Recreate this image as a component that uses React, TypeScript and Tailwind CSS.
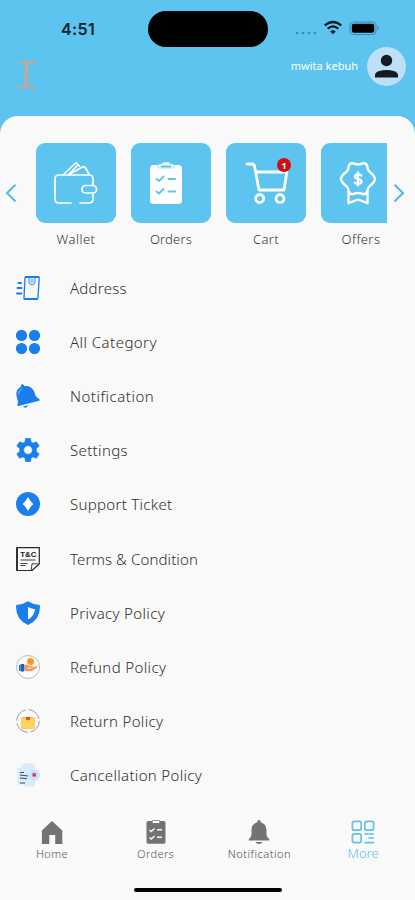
import type { ReactNode } from 'react';

interface Item {
  label: string;
  icon: ReactNode;
  className?: string;
}

function WalletIcon() {
  return (
    <svg className="h-[80px] w-[80px]" viewBox="0 0 80 80" fill="none" stroke="#fff" strokeWidth="1.7" strokeLinecap="round" strokeLinejoin="round">
      <path d="M35 60H23q-4 0-4-4V36q0-4 4-4h30q4 0 4 4v6M57 51v5q0 4-4 4H44" />
      <rect x="46" y="42.5" width="14.5" height="7.5" rx="3.5" />
      <path d="m27.5 31.500 11-10.500q1.500-1.500 3 0l2 2M33 31.500l13.500-7.500q2-1 3 1l3.500 6M33 31l8-8" />
    </svg>
  );
}

function OrdersIcon() {
  return (
    <svg className="h-[80px] w-[80px]" viewBox="0 0 80 80" fill="none">
      <rect x="19" y="22" width="32" height="39" rx="3.500" fill="#fff" />
      <path d="M27 25v-3q0-1 1.500-1h2q1-2 2.500-2h4q1.500 0 2.500 2h2q1.500 0 1.500 1v3z" fill="#fff" stroke="#5cc4ee" strokeWidth=".5" />
      <path d="M30.500 23.500h9M25.500 36l2.500 2 4.500-4.500M37.500 36H44M25.500 48.500l2.500 2 4.500-4.500M37.500 48.500H44" stroke="#5cc4ee" strokeWidth="2" strokeLinecap="round" />
    </svg>
  );
}

function CartIcon() {
  return (
    <svg className="h-[80px] w-[80px]" viewBox="0 0 80 80" fill="none" stroke="#fff" strokeWidth="2.8" strokeLinecap="round" strokeLinejoin="round">
      <path d="M21 21h5q2 0 2.500 2L33 47h25l2.800-18H30" />
      <circle cx="33.700" cy="55.500" r="4" />
      <circle cx="54" cy="55.500" r="4" />
    </svg>
  );
}

function OffersIcon() {
  return (
    <svg className="h-[80px] w-[80px] shrink-0" viewBox="0 0 80 80" fill="none" stroke="#fff" strokeWidth="2.4" strokeLinecap="round" strokeLinejoin="round">
      <path d="M37 21.500Q40 21 42 20.300q3.500-.5 4.300 3 .3 3.500 2 5.200 5.700 4.500 5.700 7.500t-5.700 7.500q-1.700 1.700-2 4.500-.8 3.500-4.300 3.200Q40 50 37 50t-5 1.200q-3.500.3-4.300-3.200-.3-2.800-2-4.500Q20 39 20 36t5.700-7.500q1.700-1.700 2-5.200.8-3.500 4.300-3Q34 21 37 21.500Z" />
      <path d="M27.500 48.500v11.700L37 56.500l9.500 3.700V48.500" />
      <path d="M40.300 32.500c-1.500-1.800-6.300-1.500-6.300 1.200 0 3.200 6.500 1.600 6.500 4.800 0 2.900-5 2.900-6.700 1.100M37 29.500v13" strokeWidth="2.300" />
    </svg>
  );
}

function AddressIcon() {
  return (
    <svg className="h-6 w-6" viewBox="0 0 24 24" fill="none" stroke="#197bea" strokeWidth="1.500" strokeLinecap="round" strokeLinejoin="round">
      <path d="M10 1h12.200q1.200 0 1 1.200l-1.200 19q-.100 1.700-1.800 1.700H9q-1.200 0-1-1.300L9 2q0-1 1-1Z" strokeWidth="1.300" />
      <path d="M10 1h12.500M8.500 23H21" strokeWidth="1.800" />
      <path d="M13 2v4q0 2.700 3 2.700T19 6V2" strokeWidth=".9" />
      <path d="M15 3v2.500q0 1 1 1t1-1V3" strokeWidth=".7" />
      <path d="M2.500 7H5M1.500 12h4M1 17.500h4.500" strokeWidth="1.900" />
    </svg>
  );
}

function CategoryIcon() {
  return (
    <svg className="h-6 w-6" viewBox="0 0 24 24" fill="#197fec">
      <circle cx="5.500" cy="5.500" r="5.600" />
      <circle cx="18.500" cy="5.500" r="5.600" />
      <circle cx="5.500" cy="18.500" r="5.600" />
      <circle cx="18.500" cy="18.500" r="5.600" />
    </svg>
  );
}

function RingingBellIcon() {
  return (
    <svg className="h-6 w-6" viewBox="0 0 24 24" fill="#197fec">
      <path d="M4.800 1.300Q6.500-.700 8 1.300l.200.900c4-.500 8.500 1.500 10 5.500 1 3 1.500 5.500 5 7.300.900.500.700 1.300 0 1.700L2.500 22c-1 .2-1.400-.6-1-1.400C3 17 .2 13.500.3 9.500.5 6.500 2 4 4.800 2.900z" />
      <path d="M7 22.600q2.800 2.700 5.700-1.300z" />
      <path d="M2.500 10q0-3.500 3-5.200" fill="none" stroke="#b8d8fa" strokeWidth=".7" strokeLinecap="round" />
    </svg>
  );
}

function SettingsIcon() {
  return (
    <svg className="h-6 w-6" viewBox="0 0 24 24" fill="#197fec">
      <path
        fillRule="evenodd"
        d="M9.500.300h5l.6 3.600 1.900 1.100 3.400-1.300L23.300 8l-2.900 2.600v2.800l2.900 2.600-2.900 4.300L17 19l-1.900 1.100-.6 3.600h-5l-.6-3.600L7 19l-3.400 1.300L.7 16l2.900-2.600v-2.800L.7 8l2.900-4.300L7 5l1.900-1.100zM12 7.700a4.300 4.300 0 1 0 0 8.600 4.300 4.300 0 0 0 0-8.600"
        stroke="#197fec"
        strokeWidth=".5"
        strokeLinejoin="round"
      />
    </svg>
  );
}

function SupportIcon() {
  return (
    <svg className="h-6 w-6" viewBox="0 0 24 24">
      <circle cx="12" cy="12" r="12" fill="#197fec" />
      <path d="M12 5q2 4 5.300 7-3.300 3-5.300 7-2-4-5.300-7Q10 9 12 5" fill="#fff" />
    </svg>
  );
}

function TermsIcon() {
  return (
    <svg className="h-6 w-6" viewBox="0 0 24 24" fill="none" stroke="#292929" strokeWidth="1.200">
      <path d="M1 .700h22.300V17L16 23.500H1Z" />
      <path d="M1 .700v22.800" strokeWidth="1.800" />
      <path d="M23 17l-7-.2-.8 6.700M4.500 13h15M4.500 16.500h7M4.500 18.500h5" strokeWidth=".9" />
      <text x="12.300" y="9.500" textAnchor="middle" fill="#202020" stroke="none" fontSize="7" fontWeight="900" fontFamily="Liberation Sans, sans-serif" textLength="16" lengthAdjust="spacingAndGlyphs">T&amp;C</text>
    </svg>
  );
}

function PrivacyIcon() {
  return (
    <svg className="h-6 w-6" viewBox="0 0 24 24">
      <path d="M12 .200q5 3.300 11.800 3.900Q25 18 12 24-1 18 .2 4.100 7 3.500 12 .200" fill="#197fec" />
      <path d="M12 6q3.500 2 7 2.300Q18.500 15 12 18.500Z" fill="#fff" />
    </svg>
  );
}

function RefundIcon() {
  return (
    <svg className="h-6 w-6" viewBox="0 0 24 24" fill="none">
      <circle cx="12" cy="12" r="11.500" fill="#fcfcfc" stroke="#aaa9aa" strokeWidth=".8" />
      <circle cx="14.500" cy="6.400" r="3.500" fill="#ff981e" />
      <path d="m13.500 6 1.500 1.300" stroke="#d96d29" strokeWidth=".8" />
      <path d="M8 9.800q3-1 5 1h3q1.500.500.500 1.700L20.800 11q1.500 0 .5 1.500l-5 3.300q-1 .5-3 .4L8 15.800z" fill="#f49a61" />
      <path d="M11.500 13h4" stroke="#fff" strokeWidth=".8" />
      <path d="M4.500 9H8v7.500H4.500z" fill="#0868ca" />
      <path d="M3.700 10v6" stroke="#17427d" />
    </svg>
  );
}

function ReturnIcon() {
  return (
    <svg className="h-6 w-6" viewBox="0 0 24 24" fill="none">
      <circle cx="12" cy="12" r="11.300" stroke="#9290a5" strokeWidth=".9" strokeDasharray="15 2.800" />
      <path d="m5 9.500 1.500-1.500h11L19 9.500v9q0 1.500-1.500 1.500h-11Q5 20 5 18.500Z" fill="#ffd35a" />
      <path d="M5 9.500 6.500 8h11L19 9.500" fill="#f7c64b" />
      <path d="M10 8h4v2.500l-2 1-2-1z" fill="#e2493d" />
    </svg>
  );
}

function CancellationIcon() {
  return (
    <svg className="h-6 w-6" viewBox="0 0 24 24" fill="none">
      <path d="M6 .500h11q2 0 2 3V21q0 2.500-2.500 2.500H10q-2 0-2-2H1.500V5Z" fill="#d8ebfb" />
      <circle cx="18.500" cy="12" r="5.500" fill="#cae4fa" />
      <path d="M6 .500V5H1.500" fill="#edf6fd" />
      <path d="M4 9.500h4M4 12l8 1M4 15l7 .7M4 20h5" stroke="#344d66" strokeWidth="1.100" />
      <path d="m16.700 10.400 3 3m0-3-3 3" stroke="#e52f52" strokeWidth="1.700" />
    </svg>
  );
}

function HomeNavIcon() {
  return (
    <svg className="h-6 w-6" viewBox="0 0 24 24" fill="#737373">
      <path d="M12 1 22.300 10.500V24h-7.100v-9H9.300v9H1.900V10.500z" />
    </svg>
  );
}

function OrdersNavIcon() {
  return (
    <svg className="h-6 w-6" viewBox="0 0 24 24" fill="none">
      <rect x="2.500" y="1" width="19" height="22.800" rx="1.800" fill="#737373" />
      <rect x="8" y=".3" width="8" height="3.200" rx="1.500" fill="#f9f9f9" stroke="#737373" />
      <path d="m5.500 10 1.800 1.500L10.500 8.500M13 9.700h5M5.500 17.500 7.300 19l3.200-3M13 17.200h5" stroke="#f5f5f5" strokeWidth="1.600" />
    </svg>
  );
}

function BellNavIcon() {
  return (
    <svg className="h-6 w-6" viewBox="0 0 24 24" fill="#737373">
      <path d="M12 0q1.600 0 1.800 2.200Q19.500 4 19.500 10v4.500q0 2.500 2.700 4.500v1.600H1.800V19q2.700-2 2.700-4.500V10q0-6 5.700-7.800Q10.400 0 12 0M8.500 22h7q-1 2-3.500 2t-3.500-2" />
    </svg>
  );
}

function MoreNavIcon() {
  return (
    <svg className="h-6 w-6" viewBox="0 0 24 24" fill="none" stroke="#5fc1eb" strokeWidth="1.700" strokeLinecap="round">
      <rect x="1.400" y="1.400" width="8.800" height="8.800" rx="2" />
      <rect x="13.800" y="1.400" width="8.800" height="8.800" rx="2" />
      <rect x="1.400" y="13.800" width="8.800" height="8.800" rx="2" />
      <path d="M14 14h8.500M18 18h4.500M14 22.600h8.500" />
    </svg>
  );
}

const shortcuts: Item[] = [
  { label: 'Wallet', icon: <WalletIcon />, className: 'tracking-[0.5px]' },
  { label: 'Orders', icon: <OrdersIcon />, className: 'tracking-[0.2px]' },
  { label: 'Cart', icon: <CartIcon />, className: 'tracking-[0.3px]' },
  { label: 'Offers', icon: <OffersIcon />, className: 'tracking-[0.4px]' },
];

const menu: Item[] = [
  { label: 'Address', icon: <AddressIcon />, className: 'tracking-[0.25px]' },
  { label: 'All Category', icon: <CategoryIcon />, className: 'tracking-[0.45px]' },
  { label: 'Notification', icon: <RingingBellIcon />, className: 'tracking-[0.51px]' },
  { label: 'Settings', icon: <SettingsIcon />, className: 'tracking-[0.35px]' },
  { label: 'Support Ticket', icon: <SupportIcon />, className: 'tracking-[0.3px]' },
  { label: 'Terms & Condition', icon: <TermsIcon />, className: 'tracking-[0.11px]' },
  { label: 'Privacy Policy', icon: <PrivacyIcon />, className: 'tracking-[0.34px]' },
  { label: 'Refund Policy', icon: <RefundIcon />, className: 'tracking-[0.37px]' },
  { label: 'Return Policy', icon: <ReturnIcon />, className: 'tracking-[0.34px]' },
  { label: 'Cancellation Policy', icon: <CancellationIcon />, className: 'tracking-[0.33px]' },
];

const tabs: Item[] = [
  { label: 'Home', icon: <HomeNavIcon />, className: 'text-[11px] tracking-[0.4px] text-[#555555]' },
  { label: 'Orders', icon: <OrdersNavIcon />, className: 'text-[11px] tracking-[0.4px] text-[#555555]' },
  { label: 'Notification', icon: <BellNavIcon />, className: 'text-[11px] tracking-[0.5px] text-[#484848]' },
  { label: 'More', icon: <MoreNavIcon />, className: 'text-[13px] text-[#5cbde8]' },
];

function StatusBar() {
  return (
    <div className="flex h-[47px] items-start">
      <div className="w-[148px] pt-[19px] pl-[61px] font-['Inter',sans-serif] text-[16px] leading-5 font-semibold tracking-[0.4px] text-[#092532]">
        4:51
      </div>
      <div className="mt-[11px] h-[36px] w-[120px] rounded-full bg-black" />
      <div className="flex flex-1 items-center pt-[19px] pl-[26px]">
        <svg className="h-[18px] w-[90px]" viewBox="0 0 90 18" fill="none">
          <g fill="#398cad">
            <circle cx="3" cy="14" r="1.300" />
            <circle cx="9" cy="14" r="1.300" />
            <circle cx="15" cy="14" r="1.300" />
            <circle cx="21" cy="14" r="1.300" />
          </g>
          <path d="M30.700 6.500q8.300-7 16.600 0M33.700 9.700q5.300-4.500 10.600 0" stroke="#061820" strokeWidth="2.200" />
          <path d="M36.300 12.400q2.700-2.200 5.400 0L39 15.200z" fill="#061820" />
          <rect x="56" y="3" width="26" height="12.500" rx="3.500" stroke="#398cad" />
          <rect x="57.800" y="4.800" width="22.400" height="8.900" rx="2" fill="#000" />
          <path d="M83.500 7v4q1.500-.5 1.500-2t-1.500-2" fill="#398cad" />
        </svg>
      </div>
    </div>
  );
}

function Header() {
  return (
    <header className="h-[116px]">
      <StatusBar />
      <div className="flex h-[38px] items-center justify-between pr-[9px] pl-[17px]">
        <svg className="mt-[17px] h-[30px] w-[20px]" viewBox="0 0 20 30" fill="none" stroke="#bca9a0" strokeLinecap="round" strokeWidth="2.700">
          <path d="M3 3.500 8 2l10 .5M2 28l6-2 9 .3" />
          <path d="M9.700 4 9 25" strokeWidth="3.700" />
        </svg>
        <div className="flex items-center">
          <span className="mr-[9px] font-['Noto_Sans',sans-serif] text-[11px] font-normal whitespace-nowrap text-white">mwita kebuh</span>
          <svg className="h-[39px] w-[39px]" viewBox="0 0 39 39">
            <circle cx="19.500" cy="19.500" r="19.500" fill="#bfdff8" />
            <circle cx="19.500" cy="13.500" r="5.700" fill="#141c20" />
            <path d="M8 30.500v-2q0-3 3.500-4.200 8-2.800 16 0 3.500 1.200 3.500 4.200v2z" fill="#141c20" />
          </svg>
        </div>
      </div>
    </header>
  );
}

function Shortcuts() {
  return (
    <section className="flex h-[145px] items-start pt-[27px]">
      <svg className="mt-[41px] ml-[5px] h-[18px] w-[12px] shrink-0" viewBox="0 0 12 18" fill="none" stroke="#4fb8e7" strokeWidth="2">
        <path d="M10.500.8 2 9l8.500 8.500" />
      </svg>
      <div className="ml-[19px] flex w-[351px] gap-[15px] overflow-hidden">
        {shortcuts.map((item) => (
          <div key={item.label} className="w-[80px] shrink-0">
            <div className="relative h-[80px] overflow-hidden rounded-[9px] bg-[#5cc4ee]">
              {item.icon}
              {item.label === 'Cart' && (
                <span className="absolute top-[15px] left-[51px] flex h-[14px] w-[14px] items-center justify-center rounded-full bg-[#d30c13] text-[9px] leading-none font-bold text-white">
                  1
                </span>
              )}
            </div>
            <div className={`mt-[7px] text-center text-[13px] leading-[18px] text-[#333333] ${item.className}`}>{item.label}</div>
          </div>
        ))}
      </div>
      <svg className="mt-[41px] ml-[6px] h-[18px] w-[12px] shrink-0" viewBox="0 0 12 18" fill="none" stroke="#4fb8e7" strokeWidth="2">
        <path d="M1.500.8 10 9l-8.500 8.500" />
      </svg>
    </section>
  );
}

function MenuRow({ item }: { item: Item }) {
  return (
    <div className="flex h-[54.1px] items-center gap-[30px] pl-4">
      {item.icon}
      <span className={`text-[15px] leading-5 whitespace-nowrap text-[#303030] ${item.className}`}>{item.label}</span>
    </div>
  );
}

function BottomNav() {
  return (
    <nav className="h-[85px] bg-[#fafafa]">
      <div className="grid h-[67px] grid-cols-4 pt-[5px]">
        {tabs.map((tab) => (
          <div key={tab.label} className="flex flex-col items-center">
            {tab.icon}
            <span className={`pt-px leading-[17px] ${tab.className}`}>{tab.label}</span>
          </div>
        ))}
      </div>
      <div className="mx-auto mt-[6px] h-[4px] w-[148px] rounded-full bg-black" />
    </nav>
  );
}

export default function App() {
  return (
    <div className="h-[900px] w-[415px] overflow-hidden bg-[#5cc4ee] font-['Noto_Sans',sans-serif] font-light">
      <Header />
      <main className="flex h-[784px] flex-col rounded-t-[18px] bg-[#f9f9f9]">
        <Shortcuts />
        <section className="h-[554px]">
          {menu.map((item) => (
            <MenuRow key={item.label} item={item} />
          ))}
        </section>
        <BottomNav />
      </main>
    </div>
  );
}
